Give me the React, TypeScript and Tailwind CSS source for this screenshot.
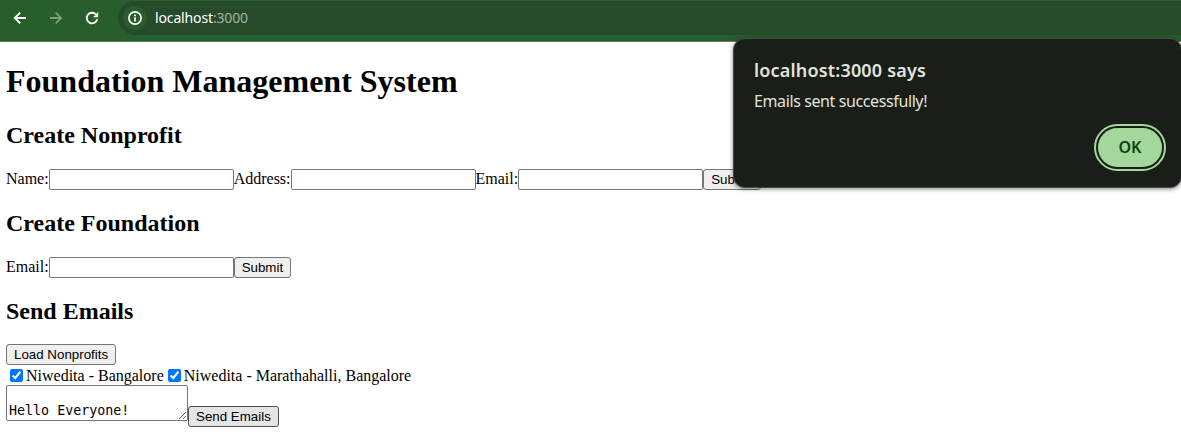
import type { ReactNode } from "react";

function TextField({ label }: { label: string }) {
  return (
    <label className="flex h-[21px] items-start">
      <span className="leading-[19px]">{label}</span>
      <input
        aria-label={label}
        className="h-[21px] w-[185px] rounded-[2px] border border-[#767676] bg-white px-[2px] font-['Liberation_Sans',sans-serif] text-[13.333px] outline-none"
      />
    </label>
  );
}

function PageButton({ children, active = false }: { children: ReactNode; active?: boolean }) {
  return (
    <button
      className={`h-[21px] shrink-0 rounded-[3px] border px-[7px] font-['Liberation_Sans',sans-serif] text-[13.333px] leading-[19px] whitespace-nowrap text-black ${
        active ? "border-[#4f4f4f] bg-[#e5e5e5]" : "border-[#767676] bg-[#efefef]"
      }`}
    >
      {children}
    </button>
  );
}

function Nonprofit({ name }: { name: string }) {
  return (
    <label className="flex h-[19px] items-start">
      <input type="checkbox" defaultChecked className="mt-[3px] mr-[3px] ml-1 size-[13px] accent-[#0075ff]" />
      <span className="leading-[19px]">{name}</span>
    </label>
  );
}

function Toolbar() {
  return (
    <header className="flex h-[42px] items-start border-b border-[#5b8060] bg-[#285e2b]">
      <div className="flex h-[36px] w-[118px] shrink-0 items-center pl-3">
        <svg className="size-4" viewBox="0 0 16 16" fill="none" stroke="#fff" strokeWidth="1.9">
          <path d="M14 8H3M8.2 2.6L2.8 8L8.2 13.4" />
        </svg>
        <svg className="ml-5 size-4" viewBox="0 0 16 16" fill="none" stroke="#7b9f7d" strokeWidth="1.9">
          <path d="M2 8H13M7.8 2.6L13.2 8L7.8 13.4" />
        </svg>
        <svg className="ml-5 size-4" viewBox="0 0 16 16">
          <path d="M13.2 9.2A5.3 5.3 0 1 1 11.8 4.3L13 5.5" fill="none" stroke="#fff" strokeWidth="1.9" />
          <path d="M14.2 2V7.2H9L10.7 5.5H12.6V3.6Z" fill="#fff" />
        </svg>
      </div>
      <div className="mt-px flex h-[34px] grow items-center rounded-l-full bg-[#274a2a] pl-[5px]">
        <div className="flex size-6 items-center justify-center rounded-full bg-[#285e2b]">
          <svg className="size-4" viewBox="0 0 16 16" fill="none" stroke="#fff" strokeWidth="1.7">
            <circle cx="8" cy="8" r="6.1" />
            <path d="M8 7.3V11.4M8 4.6V6.2" />
          </svg>
        </div>
        <div className="ml-2 font-['Noto_Sans',sans-serif] text-[14px] leading-5 tracking-[-0.14px] text-[#a2b3a2]">
          <span className="text-white">localhost</span>:3000
        </div>
      </div>
    </header>
  );
}

function AlertDialog() {
  return (
    <div
      role="alertdialog"
      className="absolute top-[38px] left-[733px] flex h-[150px] w-[449px] flex-col rounded-[12px] border border-[#464b46] bg-[#1a1e19] px-5 pt-[19px] font-['Noto_Sans',sans-serif] text-[#e0e4db] shadow-[0_1px_4px_rgba(0,0,0,0.5)]"
    >
      <h2 className="h-6 text-[18px] leading-6 font-semibold tracking-[0.18px] whitespace-nowrap">localhost:3000 says</h2>
      <p className="mt-[9px] h-5 text-[16px] leading-5 tracking-[-0.39px] whitespace-nowrap">Emails sent successfully!</p>
      <button className="mt-[17px] mr-[-1px] flex h-[39px] w-[64px] items-center justify-center self-end rounded-full bg-[#a3d79b] pb-px text-[16px] font-semibold text-[#0b4513] outline-2 outline-offset-2 outline-[#a3d79b]">
        OK
      </button>
    </div>
  );
}

export default function App() {
  return (
    <div className="relative h-[439px] w-full overflow-hidden bg-white font-['Liberation_Serif',serif] text-[16px] text-black">
      <Toolbar />
      <main className="pl-[6px]">
        <h1 className="pt-[21px] text-[32px] leading-[37px] font-bold">Foundation Management System</h1>
        <h2 className="mt-[22px] text-[24px] leading-[27px] font-bold">Create Nonprofit</h2>
        <form className="mt-5 flex" onSubmit={(event) => event.preventDefault()}>
          <TextField label="Name:" />
          <TextField label="Address:" />
          <TextField label="Email:" />
          <PageButton>Submit</PageButton>
        </form>
        <h2 className="mt-5 text-[24px] leading-[27px] font-bold">Create Foundation</h2>
        <form className="mt-5 flex" onSubmit={(event) => event.preventDefault()}>
          <TextField label="Email:" />
          <PageButton>Submit</PageButton>
        </form>
        <h2 className="mt-5 text-[24px] leading-[27px] font-bold">Send Emails</h2>
        <div className="mt-[19px] flex">
          <PageButton>Load Nonprofits</PageButton>
        </div>
        <div className="mt-px flex h-[19px]">
          <Nonprofit name="Niwedita - Bangalore" />
          <Nonprofit name="Niwedita - Marathahalli, Bangalore" />
        </div>
        <div className="flex items-start">
          <textarea
            aria-label="Message"
            defaultValue={"\nHello Everyone!"}
            className="h-[36px] w-[182px] resize overflow-hidden rounded-[2px] border border-[#767676] p-[2px] font-['DejaVu_Sans_Mono',monospace] text-[13.333px] leading-[15px] outline-none"
          />
          <div className="mt-[21px] flex">
            <PageButton active>Send Emails</PageButton>
          </div>
        </div>
      </main>
      <AlertDialog />
    </div>
  );
}
